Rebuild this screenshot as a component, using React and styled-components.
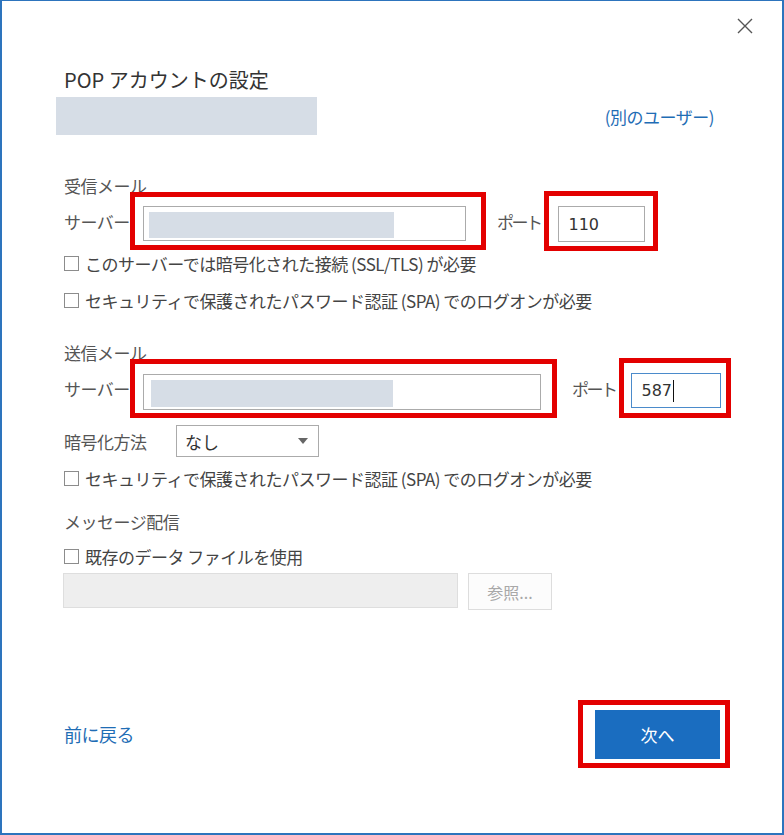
import React from 'react';
import styled, { createGlobalStyle } from 'styled-components';

const GlobalStyle = createGlobalStyle`
  html, body {
    margin: 0;
    padding: 0;
    background: #fff;
  }
  body {
    font-family: "Noto Sans CJK JP", "Noto Sans", sans-serif;
    color: #444;
  }
`

const Dialog = styled.div`
  box-sizing: border-box;
  width: 784px;
  height: 835px;
  border: 2px solid #2d74bd;
  border-top-width: 1px;
  background: #fff;
  padding: 0 52px 0 62px;
  display: flex;
  flex-direction: column;
`
const TopBar = styled.div`
  height: 49px;
  display: flex;
  align-items: center;
  justify-content: flex-end;
  margin-right: -23px;
`
const Close = styled.button`
  border: 0;
  background: none;
  padding: 0;
  width: 16px;
  height: 16px;
  display: flex;
  cursor: pointer;
`
const Title = styled.h1`
  margin: 16px 0 0;
  font-size: 20px;
  line-height: 28px;
  font-weight: 400;
  color: #333;
`
const AccountRow = styled.div`
  margin-top: 3px;
  height: 38px;
  display: flex;
  align-items: center;
  justify-content: space-between;
  padding-right: 16px;
`
const Masked = styled.div`
  width: ${p => p.w}px;
  height: ${p => p.h}px;
  background: #d6dde6;
  margin-left: ${p => p.offset || 0}px;
`
const Link = styled.a`
  font-size: ${p => p.size || 17}px;
  color: #1f6db5;
  cursor: pointer;
  letter-spacing: -0.5px;
`
const SectionLabel = styled.div`
  margin-top: ${p => p.top}px;
  font-size: 17px;
  line-height: 24px;
  color: #555;
  letter-spacing: -0.5px;
`
const FieldRow = styled.div`
  margin-top: ${p => p.top}px;
  display: flex;
  align-items: center;
  height: ${p => p.h || 60}px;
`
const FieldLabel = styled.span`
  font-size: 17px;
  color: #555;
  letter-spacing: ${p => (p.tight ? '-2.5px' : '-0.5px')};
  white-space: nowrap;
  width: ${p => (p.w ? `${p.w}px` : 'auto')};
  margin-left: ${p => p.gap || 0}px;
  margin-right: ${p => p.after || 0}px;
  flex: none;
`
const Highlight = styled.div`
  box-sizing: border-box;
  border: 5px solid #e30000;
  padding: ${p => p.pad};
  display: flex;
  flex: none;
`
const TextBox = styled.div`
  box-sizing: border-box;
  width: ${p => p.w}px;
  height: ${p => p.h || 36}px;
  border: 1px solid ${p => (p.focused ? '#4b8bcb' : '#ababab')};
  background: #fff;
  padding: ${p => (p.text ? '0 0 0 10px' : '5px 0 0 5px')};
  font-family: "DejaVu Sans", sans-serif;
  font-size: 16px;
  color: #333;
  display: flex;
  align-items: ${p => (p.text ? 'center' : 'flex-start')};
`
const Caret = styled.span`
  display: inline-block;
  width: 1px;
  height: 22px;
  background: #111;
  margin-left: 1px;
`
const CheckRow = styled.label`
  margin-top: ${p => p.top}px;
  display: flex;
  align-items: center;
  height: 24px;
  font-size: 17px;
  color: #444;
  letter-spacing: -0.5px;
  white-space: nowrap;
`
const Box = styled.span`
  box-sizing: border-box;
  width: 15px;
  height: 15px;
  border: 1px solid #8c8c8c;
  background: #fff;
  margin-right: 6px;
  flex: none;
`
const Select = styled.div`
  box-sizing: border-box;
  width: 143px;
  height: 32px;
  border: 1px solid #ababab;
  margin-left: 4px;
  display: flex;
  align-items: center;
  justify-content: space-between;
  padding: 0 10px 0 8px;
  font-size: 17px;
  color: #333;
`
const Arrow = styled.span`
  width: 0;
  height: 0;
  border-left: 5px solid transparent;
  border-right: 5px solid transparent;
  border-top: 6px solid #666;
`
const FileRow = styled.div`
  margin-top: 5px;
  display: flex;
  align-items: flex-start;
  margin-left: -1px;
`
const DisabledInput = styled.div`
  box-sizing: border-box;
  width: 395px;
  height: 35px;
  background: #eeeeee;
  border: 1px solid #dedede;
`
const DisabledButton = styled.div`
  box-sizing: border-box;
  width: 84px;
  height: 37px;
  margin-left: 10px;
  border: 1px solid #dddddd;
  background: #fcfcfc;
  color: #a8a8a8;
  font-size: 16px;
  display: flex;
  align-items: center;
  justify-content: center;
`
const Footer = styled.div`
  margin-top: 90px;
  display: flex;
  align-items: center;
  justify-content: space-between;
`
const Primary = styled.button`
  width: 125px;
  height: 49px;
  border: 0;
  background: #1a6dc0;
  color: #fff;
  font-family: inherit;
  font-size: 17px;
  cursor: pointer;
`

const CloseIcon = () => (
  <svg width="16" height="16" viewBox="0 0 16 16">
    <path d="M1 1 L15 15 M15 1 L1 15" stroke="#555" strokeWidth="1.4" fill="none" />
  </svg>
)

const Check = ({ top, children }) => (
  <CheckRow top={top}>
    <Box />
    {children}
  </CheckRow>
)

export default function App() {
  return (
    <>
      <GlobalStyle />
      <Dialog>
        <TopBar>
          <Close aria-label="close"><CloseIcon /></Close>
        </TopBar>
        <Title>POP アカウントの設定</Title>
        <AccountRow>
          <Masked w={261} h={38} offset={-8} />
          <Link>(別のユーザー)</Link>
        </AccountRow>

        <SectionLabel top={39}>受信メール</SectionLabel>
        <FieldRow top={-7}>
          <FieldLabel w={66}>サーバー</FieldLabel>
          <Highlight pad="9px 15px 4px 8px">
            <TextBox w={323} h={35}>
              <Masked w={245} h={26} />
            </TextBox>
          </Highlight>
          <FieldLabel tight gap={11} after={3}>ポート</FieldLabel>
          <Highlight pad="10px 8px 4px 9px">
            <TextBox w={87} text>110</TextBox>
          </Highlight>
        </FieldRow>
        <Check top={0}>このサーバーでは暗号化された接続 (SSL/TLS) が必要</Check>
        <Check top={13}>セキュリティで保護されたパスワード認証 (SPA) でのログオンが必要</Check>

        <SectionLabel top={29}>送信メール</SectionLabel>
        <FieldRow top={-7}>
          <FieldLabel w={66}>サーバー</FieldLabel>
          <Highlight pad="10px 11px 3px 8px">
            <TextBox w={398}>
              <Masked w={242} h={27} offset={2} />
            </TextBox>
          </Highlight>
          <FieldLabel tight gap={15} after={3}>ポート</FieldLabel>
          <Highlight pad="10px 5px 5px 7px">
            <TextBox w={90} h={35} text focused>587<Caret /></TextBox>
          </Highlight>
        </FieldRow>
        <FieldRow top={7} h={32}>
          <FieldLabel w={108}>暗号化方法</FieldLabel>
          <Select>
            なし
            <Arrow />
          </Select>
        </FieldRow>
        <Check top={9}>セキュリティで保護されたパスワード認証 (SPA) でのログオンが必要</Check>

        <SectionLabel top={20}>メッセージ配信</SectionLabel>
        <Check top={10}>既存のデータ ファイルを使用</Check>
        <FileRow>
          <DisabledInput />
          <DisabledButton>参照...</DisabledButton>
        </FileRow>

        <Footer>
          <Link size={18}>前に戻る</Link>
          <Highlight pad="5px 5px 4px 12px">
            <Primary>次へ</Primary>
          </Highlight>
        </Footer>
      </Dialog>
    </>
  );
}
